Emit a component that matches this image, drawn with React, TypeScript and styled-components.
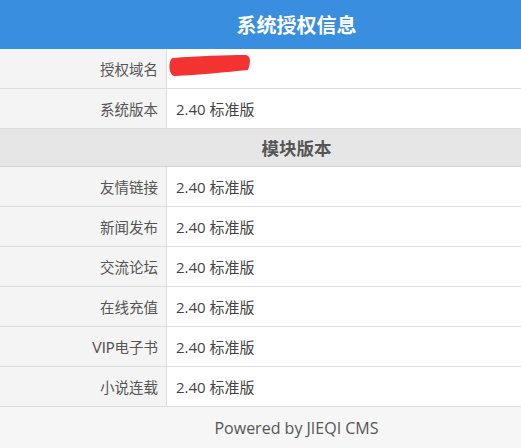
import React from "react";
import styled, { createGlobalStyle } from "styled-components";

const Global = createGlobalStyle`
  html, body { margin: 0; padding: 0; background: #fff; }
  body { font-family: "Open Sans", "Noto Sans CJK SC", sans-serif; font-size: 14px; color: #333; }
`;

const Table = styled.div`
  width: 521px;
  display: grid;
  grid-template-columns: 167px 1fr;
`;

const Title = styled.div`
  grid-column: 1 / -1;
  height: 49px;
  background: #3a8ee0;
  color: #fff;
  font-size: 20px;
  font-weight: bold;
  display: flex;
  align-items: center;
  justify-content: center;
  padding-left: 72px;
  box-sizing: border-box;
`;

const Label = styled.div`
  height: 39px;
  border-bottom: 1px solid #dcdcdc;
  border-right: 1px solid #dcdcdc;
  background: #f4f4f4;
  color: #555;
  font-family: "Lato", "Noto Sans CJK SC", sans-serif;
  font-size: 14.5px;
  display: flex;
  align-items: center;
  justify-content: flex-end;
  padding-right: 8px;
`;

const Value = styled.div<{ $flush?: boolean }>`
  height: 39px;
  border-bottom: 1px solid #dcdcdc;
  background: #fff;
  color: #444;
  font-size: 15px;
  display: flex;
  align-items: center;
  padding-left: ${(p) => (p.$flush ? "0" : "9px")};
`;

const Section = styled.div`
  grid-column: 1 / -1;
  height: 37px;
  border-bottom: 1px solid #d4d4d4;
  background: #e6e6e6;
  color: #555;
  font-size: 17.5px;
  font-weight: bold;
  display: flex;
  align-items: center;
  justify-content: center;
  padding-left: 72px;
`;

const Footer = styled.div`
  grid-column: 1 / -1;
  height: 42px;
  background: #f6f6f6;
  color: #555;
  font-size: 16px;
  display: flex;
  align-items: center;
  justify-content: center;
  padding-left: 72px;
`;

const Redact = () => (
  <svg width="90" height="39" viewBox="0 0 90 39">
    <path
      d="M6 9 C 30 7, 60 6, 78 6 C 84 6, 84 13, 81 21 C 60 23, 30 26, 8 27 C 1 27, 1 10, 6 9 Z"
      fill="#f33232"
    />
  </svg>
);

const modules = ["友情链接", "新闻发布", "交流论坛", "在线充值", "VIP电子书", "小说连载"];

export default function App() {
  return (
    <>
      <Global />
      <Table>
        <Title>系统授权信息</Title>
        <Label>授权域名</Label>
        <Value $flush><Redact /></Value>
        <Label>系统版本</Label>
        <Value>2.40 标准版</Value>
        <Section>模块版本</Section>
        {modules.map((m) => (
          <React.Fragment key={m}>
            <Label>{m}</Label>
            <Value>2.40 标准版</Value>
          </React.Fragment>
        ))}
        <Footer>Powered by JIEQI CMS</Footer>
      </Table>
    </>
  );
}
